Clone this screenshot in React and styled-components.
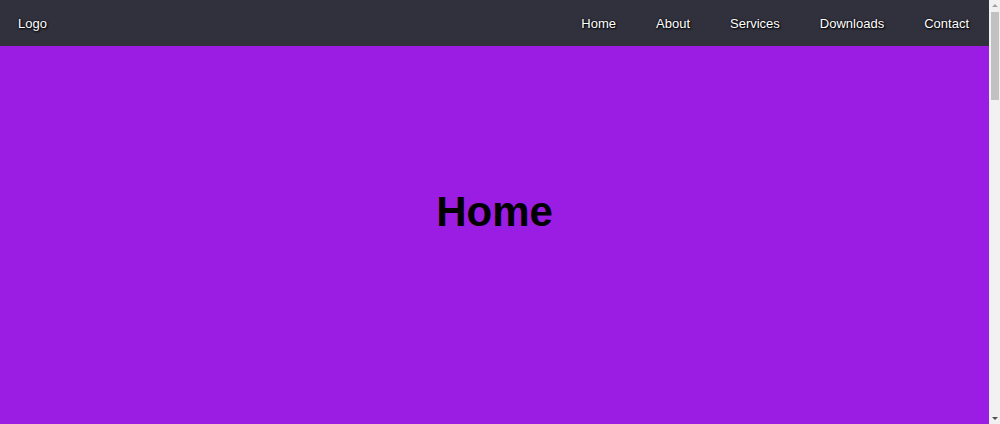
import React from "react";
import styled, { createGlobalStyle } from "styled-components";

const links = ["Home", "About", "Services", "Downloads", "Contact"];

const App = () => {
  return (
    <Page>
      <GlobalStyle />
      <Main>
        <Navbar>
          <Logo href="#home">Logo</Logo>
          <NavLinks>
            {links.map((link) => (
              <NavItem key={link}>
                <NavLink href={`#${link.toLowerCase()}`}>{link}</NavLink>
              </NavItem>
            ))}
          </NavLinks>
        </Navbar>
        <Section id="home">
          <SectionTitle>Home</SectionTitle>
        </Section>
      </Main>
      <Scrollbar>
        <ArrowButton>
          <Arrow $up />
        </ArrowButton>
        <Thumb />
        <Track />
        <ArrowButton>
          <Arrow />
        </ArrowButton>
      </Scrollbar>
    </Page>
  );
};

const GlobalStyle = createGlobalStyle`
  * {
    box-sizing: border-box;
  }

  body {
    margin: 0;
    overflow: hidden;
    font-family: "Liberation Sans", Arial, sans-serif;
  }
`;

const Page = styled.div`
  display: flex;
  height: 100vh;
`;

const Main = styled.main`
  position: relative;
  flex: 1;
  display: flex;
  flex-direction: column;
`;

const Navbar = styled.nav`
  position: absolute;
  top: 0;
  left: 0;
  right: 0;
  height: 46px;
  padding: 0 20px 0 18px;
  display: flex;
  align-items: center;
  justify-content: space-between;
  background-color: #31313e;
  z-index: 10;
`;

const Logo = styled.a`
  color: #fff;
  font-size: 13px;
  text-decoration: none;
  text-shadow: 0 0 2px #000, 1px 1px 2px #000;
`;

const NavLinks = styled.ul`
  display: flex;
  gap: 40px;
  margin: 0;
  padding: 0;
  list-style: none;
`;

const NavItem = styled.li``;

const NavLink = styled.a`
  color: #fff;
  font-size: 13px;
  text-decoration: none;
  text-shadow: 0 0 2px #000, 1px 1px 2px #000;
`;

const Section = styled.section`
  flex: 1;
  display: flex;
  align-items: center;
  justify-content: center;
  background-color: #9b1ce3;
`;

const SectionTitle = styled.h1`
  margin: 0;
  font-size: 42px;
  font-weight: bold;
  color: #000;
`;

const Scrollbar = styled.div`
  width: 11px;
  display: flex;
  flex-direction: column;
  background-color: #f1f1f1;
`;

const ArrowButton = styled.div`
  height: 11px;
  display: flex;
  align-items: center;
  justify-content: center;
`;

const Arrow = styled.span`
  width: 0;
  height: 0;
  border-left: 3px solid transparent;
  border-right: 3px solid transparent;
  ${(props) =>
    props.$up
      ? "border-bottom: 3px solid #a3a3a3;"
      : "border-top: 3px solid #505050;"}
`;

const Thumb = styled.div`
  height: 88px;
  margin: 1px 1px 0 2px;
  background-color: #c1c1c1;
`;

const Track = styled.div`
  flex: 1;
`;

export default App;
